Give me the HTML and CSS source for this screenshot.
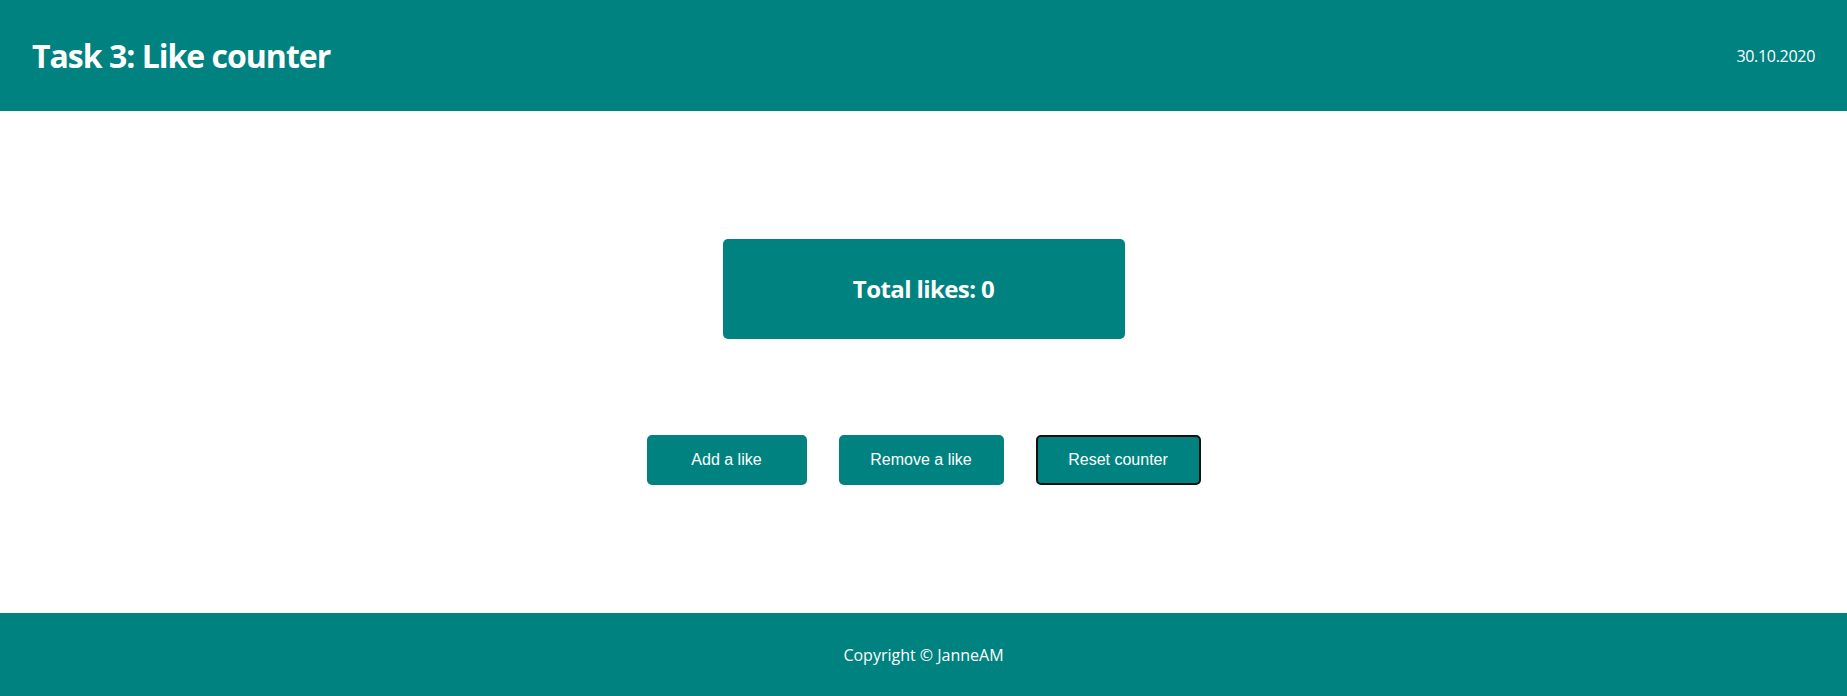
FILE: index.html
```html
<!DOCTYPE html>
<html lang="en">
<head>
<meta charset="utf-8">
<title>Task 3: Like counter</title>
<link rel="stylesheet" href="styles.css">
</head>
<body>
<header class="site-header">
  <h1 class="site-title">Task 3: Like counter</h1>
  <span class="site-date">30.10.2020</span>
</header>
<main class="content">
  <div class="counter-box">
    <h2 class="counter-text">Total likes: 0</h2>
  </div>
  <div class="button-row">
    <button class="btn btn-add">Add a like</button>
    <button class="btn btn-remove">Remove a like</button>
    <button class="btn btn-reset btn-focused">Reset counter</button>
  </div>
</main>
<footer class="site-footer">
  <p class="copyright">Copyright © JanneAM</p>
</footer>
</body>
</html>
```
FILE: styles.css
```css
html, body {
  margin: 0;
  padding: 0;
}
body {
  font-family: "Open Sans", "Noto Sans", sans-serif;
  color: #fff;
  background: #fff;
}
.site-header {
  height: 111px;
  background: #008380;
  display: flex;
  align-items: center;
  justify-content: space-between;
  padding: 0 32px 0 32px;
}
.site-title {
  margin: 0;
  font-size: 32px;
  font-weight: 700;
  letter-spacing: -1px;
  line-height: 1;
}
.site-date {
  font-size: 16px;
  letter-spacing: -0.3px;
}
.content {
  height: 502px;
  box-sizing: border-box;
  padding-top: 128px;
  display: flex;
  flex-direction: column;
  align-items: center;
}
.counter-box {
  width: 402px;
  height: 100px;
  background: #008380;
  border-radius: 5px;
  display: flex;
  align-items: center;
  justify-content: center;
}
.counter-text {
  margin: 0;
  font-size: 24px;
  font-weight: 700;
  letter-spacing: -0.6px;
  line-height: 1;
}
.button-row {
  margin-top: 96px;
  display: flex;
  gap: 32px;
}
.btn {
  height: 50px;
  box-sizing: border-box;
  background: #008380;
  color: #fff;
  border: 2px solid #008380;
  border-radius: 5px;
  font-family: "Liberation Sans", Arial, sans-serif;
  font-size: 16px;
  padding: 0;
  cursor: pointer;
}
.btn-add { width: 160px; }
.btn-remove { width: 165px; }
.btn-reset { width: 165px; }
.btn-focused {
  border-color: #111;
}
.site-footer {
  height: 83px;
  background: #008380;
  display: flex;
  align-items: center;
  justify-content: center;
}
.copyright {
  margin: 0;
  font-size: 16px;
}
```
